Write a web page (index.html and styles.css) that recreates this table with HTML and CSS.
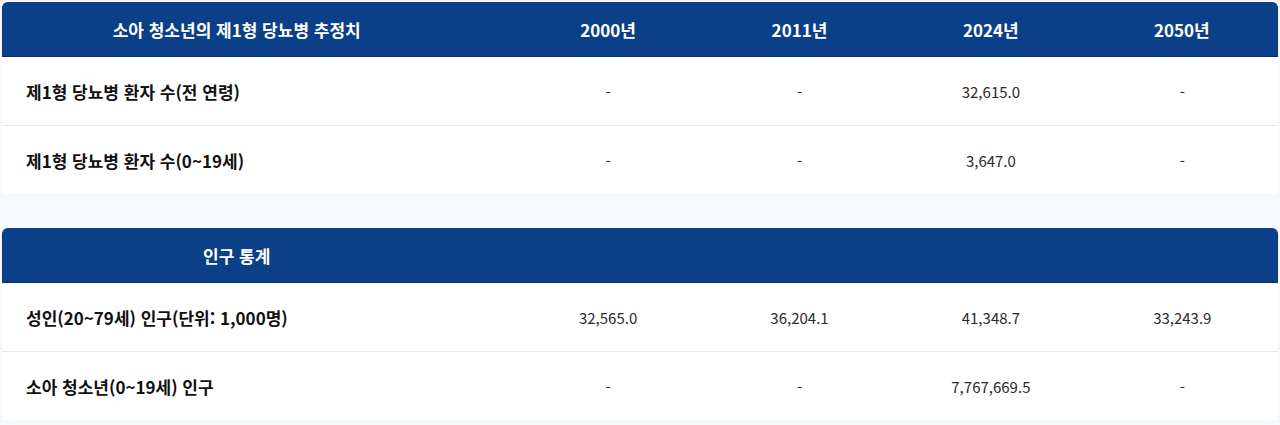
FILE: index.html
```html
<!DOCTYPE html>
<html lang="ko">
<head>
<meta charset="utf-8">
<title>소아 청소년의 제1형 당뇨병 추정치</title>
<link rel="stylesheet" href="styles.css">
</head>
<body>
<div class="wrap">
  <table class="data-table">
    <colgroup>
      <col class="col-label"><col class="col-year"><col class="col-year"><col class="col-year"><col class="col-year">
    </colgroup>
    <thead>
      <tr>
        <th class="th-label">소아 청소년의 제1형 당뇨병 추정치</th>
        <th>2000년</th>
        <th>2011년</th>
        <th>2024년</th>
        <th>2050년</th>
      </tr>
    </thead>
    <tbody>
      <tr>
        <td class="label">제1형 당뇨병 환자 수(전 연령)</td>
        <td>-</td><td>-</td><td>32,615.0</td><td>-</td>
      </tr>
      <tr>
        <td class="label">제1형 당뇨병 환자 수(0~19세)</td>
        <td>-</td><td>-</td><td>3,647.0</td><td>-</td>
      </tr>
    </tbody>
  </table>

  <table class="data-table">
    <colgroup>
      <col class="col-label"><col class="col-year"><col class="col-year"><col class="col-year"><col class="col-year">
    </colgroup>
    <thead>
      <tr>
        <th class="th-label">인구 통계</th>
        <th></th><th></th><th></th><th></th>
      </tr>
    </thead>
    <tbody>
      <tr>
        <td class="label">성인(20~79세) 인구(단위: 1,000명)</td>
        <td>32,565.0</td><td>36,204.1</td><td>41,348.7</td><td>33,243.9</td>
      </tr>
      <tr>
        <td class="label">소아 청소년(0~19세) 인구</td>
        <td>-</td><td>-</td><td>7,767,669.5</td><td>-</td>
      </tr>
    </tbody>
  </table>
</div>
</body>
</html>
```

FILE: styles.css
```css
html, body {
  margin: 0;
  padding: 0;
  background: #f5f8fd;
}

body {
  font-family: "Noto Sans CJK KR", "Noto Sans", sans-serif;
}

.wrap {
  padding: 2px 2px 0 2px;
  display: flex;
  flex-direction: column;
  gap: 34px;
}

.data-table {
  width: 100%;
  border-collapse: separate;
  border-spacing: 0;
  table-layout: fixed;
}

.col-label { width: 40%; }
.col-year { width: 15%; }

.data-table th {
  height: 54px;
  padding: 0;
  background: #0b3f88;
  color: #ffffff;
  font-size: 17px;
  font-weight: 700;
  text-align: center;
  border-bottom: 1px solid #05306a;
}

.data-table th:first-child {
  border-top-left-radius: 6px;
  border-left: 1px solid #07357a;
}

.data-table th:last-child {
  border-top-right-radius: 6px;
  border-right: 1px solid #07357a;
}

.data-table th.th-label {
  padding: 0 58px 0 16px;
}

.data-table td {
  height: 68px;
  padding: 0;
  background: #ffffff;
  color: #2a2a2a;
  font-size: 15px;
  text-align: center;
  border-bottom: 1px solid #e2e7ef;
}

.data-table tbody tr:last-child td {
  border-bottom: none;
}

.data-table td.label {
  text-align: left;
  padding-left: 24px;
  color: #111111;
  font-size: 17px;
  font-weight: 700;
}
```
